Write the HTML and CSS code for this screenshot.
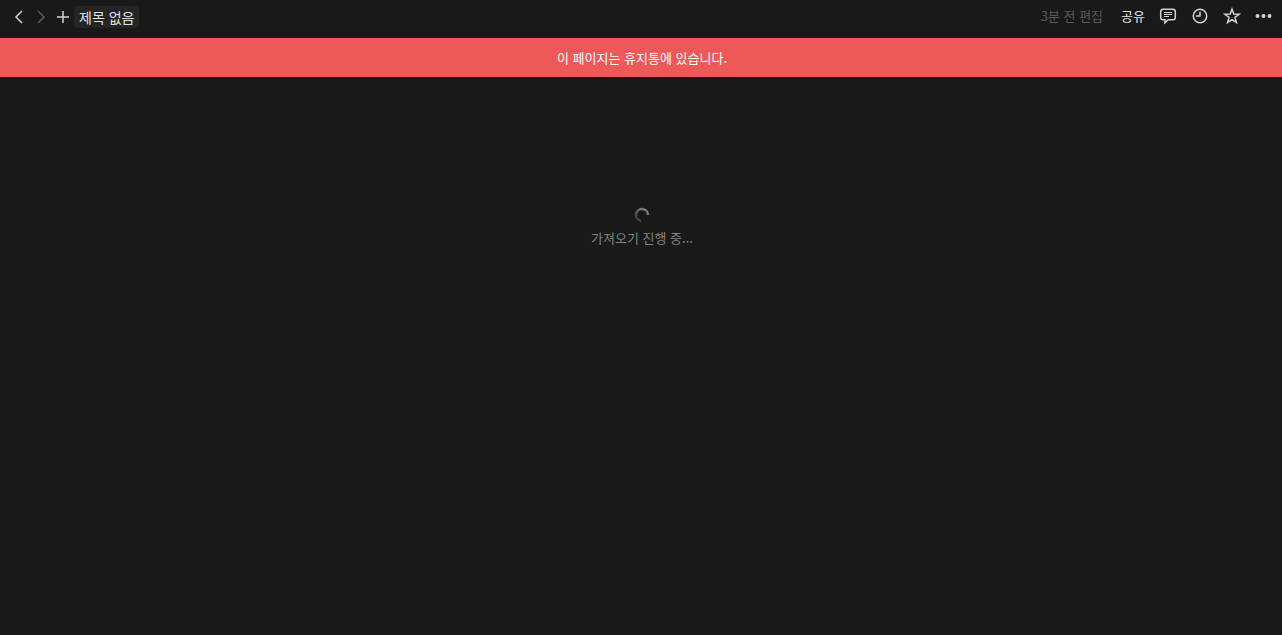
FILE: index.html
```html
<!DOCTYPE html>
<html lang="ko">
<head>
  <meta charset="UTF-8" />
  <meta name="viewport" content="width=device-width, initial-scale=1.0"/>
  <title>제목 없음</title>
  <link rel="stylesheet" href="styles.css">
</head>
<body>
  <header class="topbar">
    <nav class="topbar-left">
      <button class="icon-btn nav-btn" aria-label="뒤로">
        <svg width="16" height="16" viewBox="0 0 16 16"><path d="M11 2 5 8l6 6"/></svg>
      </button>
      <button class="icon-btn nav-btn" aria-label="앞으로" disabled>
        <svg width="16" height="16" viewBox="0 0 16 16"><path d="M5 2l6 6-6 6"/></svg>
      </button>
      <button class="icon-btn nav-btn" aria-label="새 페이지">
        <svg width="16" height="16" viewBox="0 0 16 16"><path d="M8 2v12M2 8h12"/></svg>
      </button>
      <a class="breadcrumb" href="#">제목 없음</a>
    </nav>

    <div class="topbar-right">
      <span class="edited">3분 전 편집</span>
      <button class="share-btn">공유</button>
      <button class="icon-btn" aria-label="댓글">
        <svg width="18" height="18" viewBox="0 0 18 18">
          <path d="M4 2.200h10a2.300 2.300 0 0 1 2.300 2.300v6a2.300 2.300 0 0 1-2.300 2.300H9.200L6 15.800v-3H4a2.300 2.300 0 0 1-2.300-2.300v-6A2.300 2.300 0 0 1 4 2.200z"/>
          <path class="thin" d="M5 5.500h8M5 7.500h8M5 9.500h5"/>
        </svg>
      </button>
      <button class="icon-btn" aria-label="업데이트">
        <svg width="18" height="18" viewBox="0 0 18 18"><circle cx="9" cy="9" r="6.700"/><path d="M9 4.800V9H5"/></svg>
      </button>
      <button class="icon-btn" aria-label="즐겨찾기">
        <svg width="18" height="18" viewBox="0 0 18 18"><path d="M9 2.200l1.800 4.900 5.300.2-4.200 3.200 1.500 5.100L9 12.700l-4.400 2.900 1.500-5.100-4.200-3.200 5.300-.2z"/></svg>
      </button>
      <button class="icon-btn" aria-label="더 보기">
        <svg class="dots" width="18" height="18" viewBox="0 0 18 18"><circle cx="2.500" cy="9" r="2"/><circle cx="8.500" cy="9" r="2"/><circle cx="14.500" cy="9" r="2"/></svg>
      </button>
    </div>
  </header>

  <div class="trash-banner">이 페이지는 휴지통에 있습니다.</div>

  <main class="loading" role="status">
    <svg class="spinner" width="16" height="16" viewBox="0 0 16 16">
      <defs>
        <linearGradient id="fade" x1="1" y1="0" x2="0" y2="1">
          <stop offset="0.3" stop-color="#777"/>
          <stop offset="1" stop-color="#333"/>
        </linearGradient>
      </defs>
      <path d="M14 8A6 6 0 1 0 7 13.900" fill="none" stroke="url(#fade)" stroke-width="2.500"/>
    </svg>
    <p class="loading-text">가져오기 진행 중...</p>
  </main>
</body>
</html>
```
FILE: styles.css
```css
:root {
  --bg: #191919;
  --crumb-bg: #252525;
  --text: #e1e1e1;
  --icon: #d3d3d3;
  --muted: #828282;
  --faint: #5a5a5a;
  --danger: #ed5959;
}

* {
  box-sizing: border-box;
}

body {
  margin: 0;
  min-height: 100vh;
  background-color: var(--bg);
  color: var(--text);
  font-family: "Noto Sans CJK KR", sans-serif;
  font-size: 13px;
  line-height: 20px;
}

button {
  border: none;
  padding: 0;
  background: none;
  color: inherit;
  font: inherit;
  cursor: pointer;
}

.topbar {
  display: flex;
  justify-content: space-between;
  height: 38px;
  padding: 0 9px 5px 8px;
}

.topbar-left,
.topbar-right {
  display: flex;
  align-items: center;
}

.topbar-right {
  gap: 14px;
  padding-bottom: 2px;
}

.icon-btn {
  display: flex;
  align-items: center;
  justify-content: center;
  color: var(--icon);
}

.icon-btn svg {
  fill: none;
  stroke: currentColor;
  stroke-width: 1.5;
}

.icon-btn .thin {
  stroke-width: 1;
}

.icon-btn .dots {
  fill: currentColor;
  stroke: none;
}

.nav-btn {
  width: 22px;
}

.nav-btn:disabled {
  color: var(--faint);
  cursor: default;
}

.breadcrumb {
  padding: 1px 5px;
  border-radius: 4px;
  background-color: var(--crumb-bg);
  color: var(--text);
  font-size: 14px;
  text-decoration: none;
}

.edited {
  margin-right: 4px;
  color: var(--faint);
}

.trash-banner {
  padding: 10px 12px 9px 14px;
  background-color: var(--danger);
  color: #fff;
  text-align: center;
}

.loading {
  display: flex;
  flex-direction: column;
  align-items: center;
  gap: 5px;
  padding: 130px 12px 0 14px;
  color: var(--muted);
}

.loading-text {
  margin: 0;
}
```
